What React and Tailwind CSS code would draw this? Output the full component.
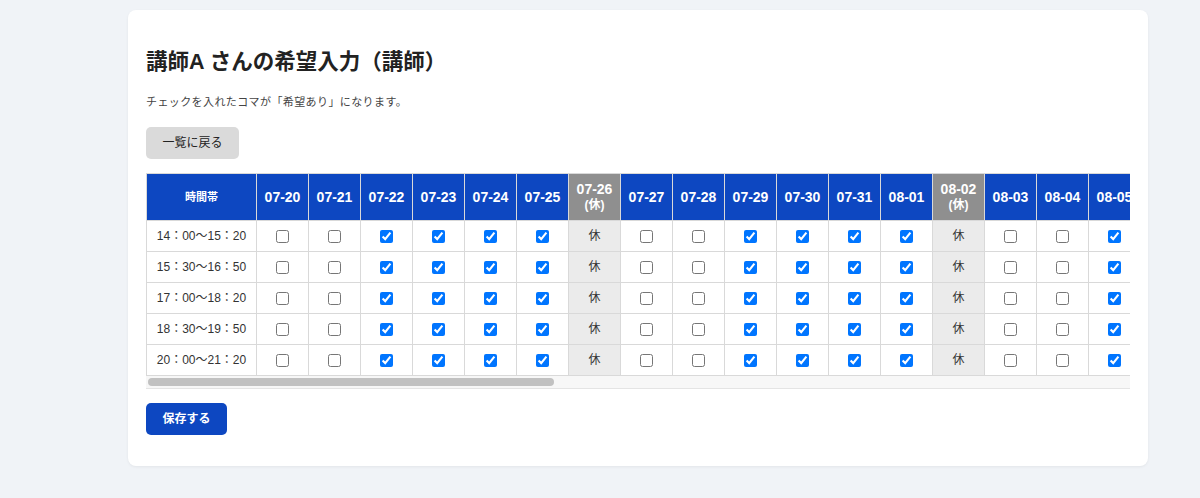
import React, { useState } from "react";

// dates shown in the wish grid: 07-20 .. 08-31
const buildDates = () => {
  const list = [];
  for (let d = 20; d <= 31; d++) list.push(`07-${String(d).padStart(2, "0")}`);
  for (let d = 1; d <= 31; d++) list.push(`08-${String(d).padStart(2, "0")}`);
  return list.map((label, i) => ({
    label,
    rest: i % 7 === 6,
    wish: [2, 3, 4, 5].includes(i % 7),
  }));
};

const slots = [
  "14：00〜15：20",
  "15：30〜16：50",
  "17：00〜18：20",
  "18：30〜19：50",
  "20：00〜21：20",
];

export default function App() {
  const dates = buildDates();

  // checked state keyed by "slot|date"
  const [checks, setChecks] = useState(() => {
    const init = {};
    slots.forEach((s) => dates.forEach((d) => (init[`${s}|${d.label}`] = d.wish)));
    return init;
  });

  const toggle = (key) => setChecks((prev) => ({ ...prev, [key]: !prev[key] }));

  return (
    <div
      className="min-h-screen bg-[#f0f3f7] pt-[10px] pb-8 [text-spacing-trim:space-all]"
      style={{ fontFamily: '"Liberation Sans", "Noto Sans CJK JP", sans-serif' }}
    >
      <div className="ml-[128px] w-[1020px] rounded-lg bg-white px-[18px] pt-[36px] pb-[31px] shadow-[0_1px_3px_rgba(0,0,0,0.06)]">
        <h1 className="text-[21.5px] font-bold leading-[32px] text-[#222]">
          講師A さんの希望入力（講師）
        </h1>
        <p className="mt-[16px] text-[11px] leading-[17px] tracking-[0.4px] text-[#444]">
          チェックを入れたコマが「希望あり」になります。
        </p>
        <button
          type="button"
          className="mt-[16px] h-[32px] w-[93px] rounded-[5px] bg-[#dadada] text-[12px] text-[#222]"
        >
          一覧に戻る
        </button>

        <div className="mt-[14px] w-full border-b border-[#e4e4e4] bg-[#f7f7f7]">
          <div className="w-full overflow-hidden">
            <table className="border-collapse bg-white text-[#222]">
              <thead>
                <tr className="h-[47px]">
                  <th className="w-[110px] min-w-[110px] border border-[#d9d9d9] bg-[#0d47c1] text-[11px] font-bold text-white">
                    時間帯
                  </th>
                  {dates.map((d) => (
                    <th
                      key={d.label}
                      className={
                        d.rest
                          ? "w-[52px] min-w-[52px] border border-[#d9d9d9] bg-[#8f8f8f] text-[14px] font-bold leading-[16px] text-white"
                          : "w-[52px] min-w-[52px] border border-[#d9d9d9] bg-[#0d47c1] text-[14px] font-bold text-white"
                      }
                    >
                      {d.label}
                      {d.rest && <div className="text-[12px] leading-[16px]">(休)</div>}
                    </th>
                  ))}
                </tr>
              </thead>
              <tbody>
                {slots.map((s) => (
                  <tr key={s} className="h-[31px]">
                    <td className="border border-[#d9d9d9] text-center text-[12px] whitespace-nowrap text-[#333]">
                      {s}
                    </td>
                    {dates.map((d) =>
                      d.rest ? (
                        <td
                          key={d.label}
                          className="border border-[#d9d9d9] bg-[#ebebeb] text-center text-[12px] text-[#333]"
                        >
                          休
                        </td>
                      ) : (
                        <td key={d.label} className="border border-[#d9d9d9] text-center">
                          <input
                            type="checkbox"
                            className="m-0 h-[13px] w-[13px] align-middle"
                            checked={checks[`${s}|${d.label}`]}
                            onChange={() => toggle(`${s}|${d.label}`)}
                          />
                        </td>
                      )
                    )}
                  </tr>
                ))}
              </tbody>
            </table>
          </div>
          {/* horizontal scrollbar */}
          <div className="flex h-[12px] items-center px-[2px]">
            <div className="h-[8px] w-[406px] rounded-full bg-[#c1c1c1]" />
          </div>
        </div>

        <button
          type="button"
          className="mt-[14px] h-[32px] w-[81px] rounded-[5px] bg-[#0d47c1] text-[12px] font-bold text-white"
        >
          保存する
        </button>
      </div>
    </div>
  );
}
